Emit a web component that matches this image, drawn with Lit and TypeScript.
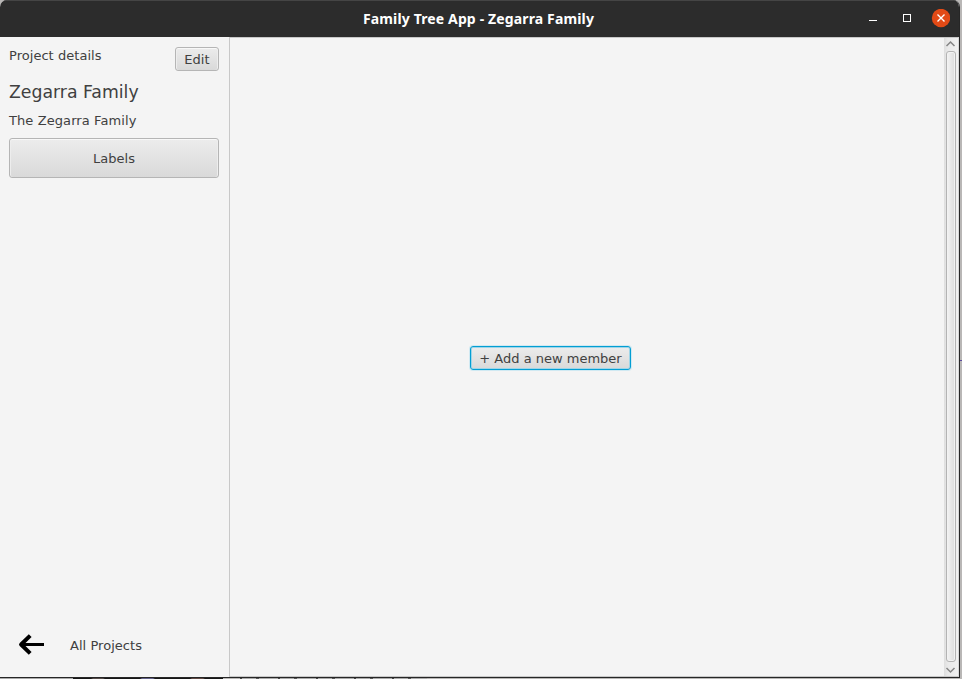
import { LitElement, html, css } from "lit";
import { customElement } from "lit/decorators.js";

@customElement("app-root")
export class AppRoot extends LitElement {
  static styles = css`
    :host {
      display: block;
      position: relative;
      width: 962px;
      height: 679px;
      overflow: hidden;
      background: #b9b7b6;
      font: 13px/16px "DejaVu Sans", sans-serif;
      letter-spacing: 0.04px;
      color: #404040;
    }
    * { box-sizing: border-box; }
    .window {
      width: 960px;
      height: 678px;
      display: flex;
      flex-direction: column;
      background: #f4f4f4;
      border-right: 1px solid #262626;
      border-bottom: 1px solid #262626;
      border-radius: 7px 7px 0 0;
      overflow: hidden;
    }
    .titlebar {
      height: 37px;
      flex: none;
      display: grid;
      grid-template-columns: 1fr auto 1fr;
      align-items: center;
      background: #2c2c2c;
      border-top: 1px solid #454545;
      color: #fff;
    }
    .title {
      grid-column: 2;
      width: 233px;
      padding-right: 2px;
      display: flex;
      justify-content: center;
      white-space: nowrap;
      font: bold 14px/20px "Noto Sans", sans-serif;
      letter-spacing: 0.14px;
    }
    .controls { justify-self: end; display: flex; margin-right: 9px; }
    .controls svg { display: block; }
    .body { flex: 1; display: flex; min-height: 0; }
    .side {
      width: 229px;
      display: flex;
      flex-direction: column;
      padding: 10px 10px 18px 9px;
    }
    .head { display: flex; justify-content: space-between; height: 24px; }
    .head span { padding-top: 1px; }
    .btn {
      display: flex;
      align-items: center;
      justify-content: center;
      border: 1px solid #b5b5b5;
      border-radius: 3px;
      background: linear-gradient(#ececec, #d9d9d9);
      box-shadow: inset 0 1px #f8f8f8, inset 1px 0 #ededed, inset -1px 0 #ededed;
      white-space: nowrap;
      padding-top: 2px;
    }
    .edit { width: 44px; height: 24px; }
    .name { font-size: 17.3px; line-height: 20px; margin-top: 11px; letter-spacing: 0; }
    .desc { margin-top: 11px; letter-spacing: 0.09px; }
    .labels { width: 210px; height: 40px; margin-top: 9px; letter-spacing: 0; }
    .back { margin-top: auto; display: flex; align-items: center; height: 28px; }
    .back svg { margin: 0 25px 0 9px; display: block; }
    .back span { padding-top: 2px; }
    .pane {
      flex: 1;
      display: flex;
      border: 1px solid #c8c8c8;
      border-right-color: #d8d8d8;
    }
    .canvas {
      flex: 1;
      display: flex;
      align-items: center;
      justify-content: center;
      padding-top: 2px;
    }
    .add {
      width: 161px;
      height: 24px;
      margin-right: 73px;
      letter-spacing: 0;
      border-color: #039ed3;
      box-shadow: 0 0 0 1px #d0e9f2, inset 0 0 0 1px #9fd5e8;
    }
    .scroll {
      width: 14px;
      display: flex;
      flex-direction: column;
      background: linear-gradient(90deg, #dedede, #e9e9e9 4px, #f0f0f0);
    }
    .thumb {
      flex: 1;
      width: 10px;
      margin-left: 2px;
      border: 1px solid #b3b3b3;
      border-radius: 3px;
      background: linear-gradient(90deg, #f3f3f3, #dcdcdc);
      box-shadow: inset 0 0 0 1px #f2f2f2;
    }
    .scroll svg { display: block; flex: none; }
    .behind { height: 1px; display: flex; }
    .behind .light { width: 73px; background: #aaa; }
    .behind .dark {
      width: 150px;
      background: linear-gradient(90deg, #161616 18px, #554b48 20px 30px, #161616 32px 67px, #62618a 69px 80px, #161616 82px 117px, #604943 119px 130px, #161616 132px);
    }
    .behind .strip {
      width: 187px;
      margin-left: 17px;
      background: repeating-linear-gradient(90deg, #444 0 2px, #aaa 2px 16px, #555 16px 19px, #aaa 19px 38px);
    }
    .mark {
      position: absolute;
      right: 0;
      top: 360px;
      width: 2px;
      height: 1px;
      background: #5a4a9c;
    }
  `;

  render() {
    return html`
      <div class="window">
        <div class="titlebar">
          <div class="title">Family Tree App - Zegarra Family</div>
          <div class="controls">
            <svg width="84" height="20" viewBox="0 0 84 20" fill="none">
              <path d="M3 11.5h8" stroke="#fff" />
              <rect x="37.5" y="5.5" width="7" height="7" stroke="#fff" />
              <circle cx="75" cy="9" r="9.2" fill="#e24a16" />
              <path d="M71.5 5.5l7 7m0-7l-7 7" stroke="#fff" stroke-width="1.4" />
            </svg>
          </div>
        </div>
        <div class="body">
          <div class="side">
            <div class="head"><span>Project details</span><div class="btn edit">Edit</div></div>
            <div class="name">Zegarra Family</div>
            <div class="desc">The Zegarra Family</div>
            <div class="btn labels">Labels</div>
            <div class="back">
              <svg width="27" height="22" viewBox="0 0 27 22" fill="none" stroke="#000">
                <path d="M12.2 1.6L3.1 10.5l9.1 8.9" stroke-width="4" stroke-linejoin="round" />
                <path d="M3 10.5h23" stroke-width="3" />
              </svg>
              <span>All Projects</span>
            </div>
          </div>
          <div class="pane">
            <div class="canvas"><div class="btn add">+ Add a new member</div></div>
            <div class="scroll">
              <svg width="14" height="13" viewBox="0 0 14 13" fill="none">
                <path d="M2.5 8L6.5 4l4 4" stroke="#858585" stroke-width="1.5" />
              </svg>
              <div class="thumb"></div>
              <svg width="14" height="14" viewBox="0 0 14 14" fill="none">
                <path d="M2.5 6l4 4 4-4" stroke="#858585" stroke-width="1.5" />
              </svg>
            </div>
          </div>
        </div>
      </div>
      <div class="behind"><div class="light"></div><div class="dark"></div><div class="strip"></div></div>
      <div class="mark"></div>
    `;
  }
}
